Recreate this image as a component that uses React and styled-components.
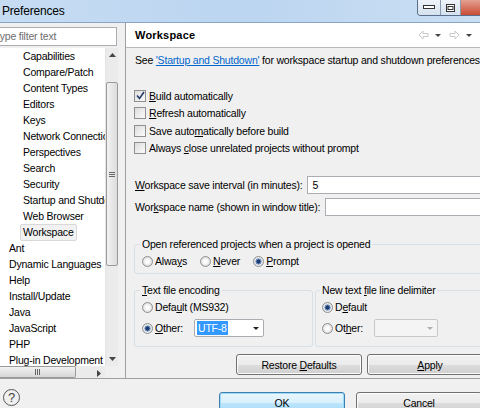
import React from 'react';
import styled, { createGlobalStyle } from 'styled-components';

const GlobalStyle = createGlobalStyle`
  html, body {
    margin: 0;
    padding: 0;
    overflow: hidden;
    background: #f0f0f0;
  }
  body {
    font-family: "Liberation Sans", Arial, sans-serif;
    font-size: 10.5px;
    letter-spacing: -0.2px;
    color: #000;
  }
`;

const treeItems = [
  { label: 'Capabilities', depth: 1 },
  { label: 'Compare/Patch', depth: 1 },
  { label: 'Content Types', depth: 1 },
  { label: 'Editors', depth: 1 },
  { label: 'Keys', depth: 1 },
  { label: 'Network Connections', depth: 1 },
  { label: 'Perspectives', depth: 1 },
  { label: 'Search', depth: 1 },
  { label: 'Security', depth: 1 },
  { label: 'Startup and Shutdown', depth: 1 },
  { label: 'Web Browser', depth: 1 },
  { label: 'Workspace', depth: 1, selected: true },
  { label: 'Ant', depth: 0 },
  { label: 'Dynamic Languages', depth: 0 },
  { label: 'Help', depth: 0 },
  { label: 'Install/Update', depth: 0 },
  { label: 'Java', depth: 0 },
  { label: 'JavaScript', depth: 0 },
  { label: 'PHP', depth: 0 },
  { label: 'Plug-in Development', depth: 0 },
];

const Check = () => (
  <svg width="9" height="9" viewBox="0 0 9 9">
    <path d="M1 4.5 L3.5 7.5 L8 1" fill="none" stroke="#243a6a" strokeWidth="1.6" />
  </svg>
);

const App = () => {
  return (
    <>
      <GlobalStyle />
      <Window>
        <TitleBar>
          <Title>Preferences</Title>
          <WinButtons>
            <WinButton width="22px">
              <svg width="12" height="5"><rect x="0.5" y="0.5" width="11" height="3" fill="#fff" stroke="#333" /></svg>
            </WinButton>
            <WinButton width="19px">
              <svg width="9" height="8"><rect x="0.5" y="0.5" width="8" height="7" fill="#fff" stroke="#333" /><rect x="2" y="2.5" width="5" height="3" fill="none" stroke="#333" /></svg>
            </WinButton>
            <CloseButton />
          </WinButtons>
        </TitleBar>

        <Main>
          <LeftPanel>
            <FilterBox>type filter text</FilterBox>
            <TreeArea>
              <TreeRows>
                {treeItems.map((item) => (
                  <TreeRow key={item.label} depth={item.depth}>
                    <TreeLabel selected={item.selected}>{item.label}</TreeLabel>
                  </TreeRow>
                ))}
              </TreeRows>
              <VScroll>
                <ScrollArrow>
                  <svg width="7" height="4"><path d="M0 4 L3.5 0 L7 4Z" fill="#444" /></svg>
                </ScrollArrow>
                <VTrack>
                  <VThumb>
                    <svg width="6" height="7"><path d="M0 1.5H6M0 3.5H6M0 5.5H6" stroke="#666" /></svg>
                  </VThumb>
                </VTrack>
                <ScrollArrow>
                  <svg width="7" height="4"><path d="M0 0 L3.5 4 L7 0Z" fill="#444" /></svg>
                </ScrollArrow>
              </VScroll>
            </TreeArea>
            <HScroll>
              <HThumb>
                <svg width="7" height="6"><path d="M1.5 0V6M3.5 0V6M5.5 0V6" stroke="#666" /></svg>
              </HThumb>
              <HTrack />
              <ScrollArrow>
                <svg width="4" height="7"><path d="M0 0 L4 3.5 L0 7Z" fill="#444" /></svg>
              </ScrollArrow>
            </HScroll>
          </LeftPanel>

          <Sash />

          <RightPanel>
            <PageHeader>
              <PageTitle>Workspace</PageTitle>
              <NavArrows>
                <svg width="11" height="10"><path d="M5 1 L1 5 L5 9 V6.5 H10 V3.5 H5Z" fill="#fff" stroke="#c8c8c8" /></svg>
                <Caret />
                <svg width="11" height="10"><path d="M6 1 L10 5 L6 9 V6.5 H1 V3.5 H6Z" fill="#fff" stroke="#c8c8c8" /></svg>
                <Caret />
              </NavArrows>
            </PageHeader>

            <Content>
              <Description>
                See <LinkText>'Startup and Shutdown'</LinkText> for workspace startup and shutdown preferences.
              </Description>

              <CheckList>
                <CheckRow><CheckBox><Check /></CheckBox><span><u>B</u>uild automatically</span></CheckRow>
                <CheckRow><CheckBox /><span><u>R</u>efresh automatically</span></CheckRow>
                <CheckRow><CheckBox /><span>Save auto<u>m</u>atically before build</span></CheckRow>
                <CheckRow><CheckBox /><span>Always <u>c</u>lose unrelated projects without prompt</span></CheckRow>
              </CheckList>

              <Fields>
                <FieldRow>
                  <span><u>W</u>orkspace save interval (in minutes):</span>
                  <TextInput>5</TextInput>
                </FieldRow>
                <FieldRow>
                  <span>Wor<u>k</u>space name (shown in window title):</span>
                  <TextInput />
                </FieldRow>
              </Fields>

              <Group top="18px" bottom="3px">
                <Legend>Open referenced projects when a project is opened</Legend>
                <RadioLine>
                  <RadioItem><Radio /><span>Alwa<u>y</u>s</span></RadioItem>
                  <RadioItem><Radio /><span><u>N</u>ever</span></RadioItem>
                  <RadioItem><Radio checked /><span><u>P</u>rompt</span></RadioItem>
                </RadioLine>
              </Group>

              <GroupPair>
                <Group width="179px">
                  <Legend><u>T</u>ext file encoding</Legend>
                  <RadioStack>
                    <RadioItem><Radio /><span>Defa<u>u</u>lt (MS932)</span></RadioItem>
                    <RadioItem tall>
                      <Radio checked />
                      <OtherLabel><u>O</u>ther:</OtherLabel>
                      <Combo width="70px">
                        <Selected>UTF-8</Selected>
                        <ComboCaret />
                      </Combo>
                    </RadioItem>
                  </RadioStack>
                </Group>
                <Group left="6px">
                  <Legend>New text <u>f</u>ile line delimiter</Legend>
                  <RadioStack>
                    <RadioItem><Radio checked /><span>D<u>e</u>fault</span></RadioItem>
                    <RadioItem tall>
                      <Radio />
                      <OtherLabel>Ot<u>h</u>er:</OtherLabel>
                      <Combo width="64px" disabled>
                        <ComboCaret disabled />
                      </Combo>
                    </RadioItem>
                  </RadioStack>
                </Group>
              </GroupPair>

              <ButtonRow>
                <PushButton><span>Restore <u>D</u>efaults</span></PushButton>
                <PushButton><u>A</u>pply</PushButton>
              </ButtonRow>
            </Content>
          </RightPanel>
        </Main>

        <Footer>
          <HelpIcon>?</HelpIcon>
          <FooterButtons>
            <PushButton primary>OK</PushButton>
            <PushButton>Cancel</PushButton>
          </FooterButtons>
        </Footer>
      </Window>
    </>
  );
};

export default App;

const Window = styled.div`
  width: 480px;
  height: 408px;
  display: flex;
  flex-direction: column;
  overflow: hidden;
  background: #f0f0f0;
`;

const TitleBar = styled.div`
  height: 22px;
  flex: none;
  display: flex;
  align-items: flex-start;
  justify-content: space-between;
  background: linear-gradient(90deg, #c6dcf3 0%, #bcd5f0 50%, #c9def3 100%);
  border-bottom: 1px solid #8aa6c6;
`;

const Title = styled.div`
  padding: 3px 0 0 2px;
  font-size: 12px;
  line-height: 16px;
  color: #000;
`;

const WinButtons = styled.div`
  display: flex;
  height: 15px;
  margin-right: -4px;
  border: 1px solid #5b6f8a;
  border-top: none;
  border-radius: 0 0 4px 4px;
  overflow: hidden;
`;

const WinButton = styled.div`
  width: ${(p) => p.width};
  display: flex;
  align-items: center;
  justify-content: center;
  background: linear-gradient(#eef3f9, #d4e1ef);
  border-right: 1px solid #8a9bb0;
`;

const CloseButton = styled.div`
  width: 22px;
  background: linear-gradient(#e4a090, #c94a34);
`;

const Main = styled.div`
  flex: 1;
  display: flex;
  min-height: 0;
`;

const LeftPanel = styled.div`
  width: 118px;
  flex: none;
  display: flex;
  flex-direction: column;
  padding-top: 4px;
`;

const FilterBox = styled.div`
  height: 17px;
  margin-left: -8px;
  margin-right: 1px;
  padding: 0 4px;
  border: 1px solid #abadb3;
  background: #fff;
  color: #6d6d6d;
  line-height: 17px;
  white-space: nowrap;
  overflow: hidden;
`;

const TreeArea = styled.div`
  flex: 1;
  display: flex;
  min-height: 0;
  margin-top: 2px;
  background: #fff;
`;

const TreeRows = styled.div`
  flex: 1;
  min-width: 0;
  overflow: hidden;
`;

const TreeRow = styled.div`
  height: 16px;
  display: flex;
  align-items: center;
  padding-left: ${(p) => (p.depth ? 20 : 6)}px;
  white-space: nowrap;
`;

const TreeLabel = styled.span`
  padding: 0 2px;
  line-height: 15px;
  border: 1px solid ${(p) => (p.selected ? '#d9d9d9' : 'transparent')};
  border-radius: 2px;
  background: ${(p) => (p.selected ? '#f2f2f2' : 'transparent')};
`;

const VScroll = styled.div`
  width: 12px;
  flex: none;
  display: flex;
  flex-direction: column;
  background: #ebebeb;
  border-left: 1px solid #e4e4e4;
`;

const ScrollArrow = styled.div`
  flex: none;
  width: 12px;
  height: 14px;
  display: flex;
  align-items: center;
  justify-content: center;
`;

const VTrack = styled.div`
  flex: 1;
  padding-top: 20px;
  padding-bottom: 86px;
  display: flex;
`;

const VThumb = styled.div`
  flex: 1;
  display: flex;
  align-items: center;
  justify-content: center;
  border: 1px solid #9a9a9a;
  border-radius: 2px;
  background: linear-gradient(90deg, #f2f2f2, #dcdcdc);
`;

const HScroll = styled.div`
  height: 12px;
  flex: none;
  display: flex;
  margin-right: 13px;
  background: #ebebeb;
`;

const HThumb = styled.div`
  width: 75px;
  display: flex;
  align-items: center;
  justify-content: center;
  border: 1px solid #9a9a9a;
  border-left: none;
  border-radius: 0 2px 2px 0;
  background: linear-gradient(#f2f2f2, #d6d6d6);
`;

const HTrack = styled.div`
  flex: 1;
`;

const Sash = styled.div`
  width: 8px;
  flex: none;
  border-right: 1px solid #a0a0a0;
  box-sizing: border-box;
  background: #f0f0f0;
`;

const RightPanel = styled.div`
  flex: 1;
  min-width: 0;
  display: flex;
  flex-direction: column;
  overflow: hidden;
`;

const PageHeader = styled.div`
  height: 24px;
  flex: none;
  display: flex;
  align-items: center;
  justify-content: space-between;
  padding-left: 9px;
  background: #fff;
  border-bottom: 1px solid #b9b9b9;
`;

const PageTitle = styled.div`
  font-weight: bold;
  font-size: 11px;
  letter-spacing: 0.2px;
`;

const NavArrows = styled.div`
  display: flex;
  align-items: center;
  gap: 6px;
  padding-right: 6px;
`;

const Caret = styled.span`
  width: 0;
  height: 0;
  border-left: 3px solid transparent;
  border-right: 3px solid transparent;
  border-top: 3px solid #444;
  margin-right: 2px;
`;

const Content = styled.div`
  width: 360px;
  padding: 4px 0 0 8px;
  display: flex;
  flex-direction: column;
`;

const Description = styled.div`
  line-height: 16px;
  padding-left: 1px;
  white-space: nowrap;
`;

const LinkText = styled.span`
  color: #0066cc;
  text-decoration: underline;
`;

const CheckList = styled.div`
  margin-top: 19px;
  display: flex;
  flex-direction: column;
`;

const CheckRow = styled.div`
  height: 17.5px;
  display: flex;
  align-items: center;
  gap: 3px;
  white-space: nowrap;
`;

const CheckBox = styled.span`
  width: 10px;
  height: 10px;
  flex: none;
  display: flex;
  align-items: center;
  justify-content: center;
  border: 1px solid #8e8f8f;
  background: linear-gradient(135deg, #dcdcdc, #fbfbfb);
`;

const Fields = styled.div`
  margin-top: 17px;
  display: flex;
  flex-direction: column;
`;

const FieldRow = styled.div`
  height: 22px;
  display: flex;
  align-items: center;
  gap: 5px;
  padding-left: 1px;
  white-space: nowrap;
`;

const TextInput = styled.div`
  flex: 1;
  height: 16px;
  padding-left: 4px;
  border: 1px solid #abadb3;
  background: #fff;
  line-height: 16px;
`;

const Group = styled.fieldset`
  margin: ${(p) => p.top || '0'} 0 0 0;
  padding: 0 0 ${(p) => p.bottom || '0'} ${(p) => p.left || '7px'};
  width: ${(p) => p.width || 'auto'};
  flex: ${(p) => (p.width ? 'none' : '1')};
  box-sizing: border-box;
  border: 1px solid #d5dfe5;
  border-radius: 3px;
  min-width: 0;
`;

const Legend = styled.legend`
  padding: 0 2px;
  margin-left: -2px;
  line-height: 16px;
  white-space: nowrap;
`;

const RadioLine = styled.div`
  display: flex;
  gap: 13px;
  height: 18px;
  align-items: center;
`;

const RadioStack = styled.div`
  display: flex;
  flex-direction: column;
  padding-bottom: 7px;
`;

const RadioItem = styled.div`
  display: flex;
  align-items: center;
  gap: 2px;
  height: ${(p) => (p.tall ? 22 : 18)}px;
  margin-top: ${(p) => (p.tall ? 1 : 0)}px;
  white-space: nowrap;
`;

const Radio = styled.span`
  width: 9px;
  height: 9px;
  flex: none;
  border-radius: 50%;
  border: 1px solid #8e8f8f;
  background: ${(p) =>
    p.checked
      ? 'radial-gradient(circle, #1c3a6a 0 1.8px, #6a8fc4 2.3px 2.8px, #e8e8e8 3.3px)'
      : 'radial-gradient(circle, #ffffff 0 1.5px, #dedede 4.5px)'};
`;

const OtherLabel = styled.span`
  width: 37px;
`;

const Combo = styled.div`
  width: ${(p) => p.width};
  height: 18px;
  flex: none;
  box-sizing: border-box;
  display: flex;
  align-items: center;
  padding: 0 4px 0 2px;
  border: 1px solid ${(p) => (p.disabled ? '#c8c8c8' : '#abadb3')};
  border-radius: 2px;
  background: ${(p) => (p.disabled ? '#f4f4f4' : '#fff')};
`;

const Selected = styled.span`
  background: #3399ff;
  color: #fff;
  padding: 0 1px;
  line-height: 14px;
`;

const ComboCaret = styled.span`
  margin-left: auto;
  width: 0;
  height: 0;
  border-left: 3px solid transparent;
  border-right: 3px solid transparent;
  border-top: 3px solid ${(p) => (p.disabled ? '#b0b0b0' : '#222')};
`;

const GroupPair = styled.div`
  display: flex;
  gap: 2px;
  margin-top: 8px;
`;

const ButtonRow = styled.div`
  display: flex;
  gap: 5px;
  margin-top: 7px;
  margin-left: 102px;
`;

const PushButton = styled.div`
  width: 124px;
  height: 19px;
  flex: none;
  display: flex;
  align-items: center;
  justify-content: center;
  border: 1px solid ${(p) => (p.primary ? '#3c7fb1' : '#707070')};
  border-radius: 3px;
  background: ${(p) =>
    p.primary
      ? 'linear-gradient(#eaf6fd 0%, #d9f0fc 50%, #bee6fd 51%, #a7d9f5 100%)'
      : 'linear-gradient(#f2f2f2 0%, #ebebeb 50%, #dddddd 51%, #cfcfcf 100%)'};
  box-shadow: inset 0 0 0 1px ${(p) => (p.primary ? '#9cdaf8' : '#fcfcfc')};
`;

const Footer = styled.div`
  height: 30px;
  flex: none;
  display: flex;
  align-items: flex-start;
  justify-content: space-between;
  border-top: 1px solid #a0a0a0;
  padding-top: 13px;
  box-sizing: border-box;
`;

const HelpIcon = styled.div`
  width: 15px;
  height: 15px;
  margin-left: 3px;
  margin-top: -3px;
  border: 1px solid #555;
  border-radius: 50%;
  display: flex;
  align-items: center;
  justify-content: center;
  font-size: 13px;
  color: #444;
`;

const FooterButtons = styled.div`
  display: flex;
  gap: 11px;
  margin-right: -2px;
`;
